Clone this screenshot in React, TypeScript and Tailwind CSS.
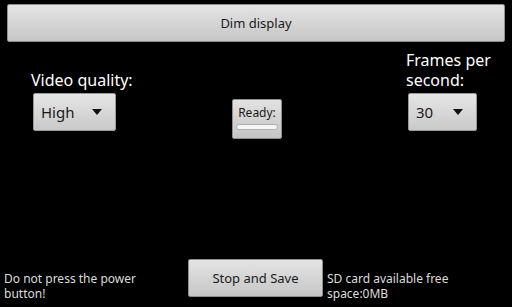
const Spinner = ({ value, width }: { value: string; width: string }) => {
    return (
        <div className={`${width} h-[38px] flex items-center justify-between pl-[7px] pr-[13px] rounded-[2px] bg-gradient-to-b from-[#e6e6e6] to-[#c9c9c9] border border-[#9a9a9a]`}>
            <span className="text-[15px] leading-[18px] text-[#1a1a1a]">{value}</span>
            <svg width="10" height="6" viewBox="0 0 10 6">
                <path d="M0 0 L10 0 L5 6 Z" fill="#111" />
            </svg>
        </div>
    )
}

const App = () => {
    return (
        <div className="w-[512px] h-[307px] bg-black flex flex-col overflow-hidden" style={{ fontFamily: '"Noto Sans", "Open Sans", sans-serif' }}>
            <div className="px-[7px] pt-[4px]">
                <button className="w-full h-[38px] rounded-[2px] bg-gradient-to-b from-[#e4e4e4] to-[#c6c6c6] border border-[#8f8f8f] text-[13px] leading-[16px] text-[#1a1a1a]">
                    Dim display
                </button>
            </div>

            <div className="flex items-start pl-[31px] pr-[18px] pt-[8px]">
                <div className="flex flex-col w-[104px] mt-[20px]">
                    <span className="text-[16px] leading-[21px] text-white whitespace-nowrap">Video quality:</span>
                    <div className="ml-[2px] mt-[2px]">
                        <Spinner value="High" width="w-[83px]" />
                    </div>
                </div>

                <div className="ml-[97px] mt-[49px] w-[50px] h-[40px] flex flex-col items-center pt-[5px] rounded-[2px] bg-gradient-to-b from-[#e2e2e2] to-[#c4c4c4] border border-[#8f8f8f]">
                    <span className="text-[12px] leading-[16px] text-[#1a1a1a]">Ready:</span>
                    <div className="w-[42px] h-[6px] mt-[3px] rounded-full bg-[#f6f6f6] border border-[#b0b0b0]"></div>
                </div>

                <div className="ml-auto flex flex-col w-[88px]">
                    <span className="text-[16px] leading-[20px] text-white">Frames per<br />second:</span>
                    <div className="ml-[2px] mt-[3px]">
                        <Spinner value="30" width="w-[69px]" />
                    </div>
                </div>
            </div>

            <div className="mt-auto flex items-end pb-[6px]">
                <div className="w-[184px] pl-[4px] text-[12px] leading-[15px] text-[#dcdcdc]">
                    Do not press the power<br />button!
                </div>
                <button className="ml-[4px] w-[135px] h-[38px] rounded-[2px] bg-gradient-to-b from-[#e4e4e4] to-[#c6c6c6] border border-[#8f8f8f] text-[13px] leading-[16px] text-[#1a1a1a] mb-[4px]">
                    Stop and Save
                </button>
                <div className="ml-[4px] text-[12px] leading-[15px] text-[#dcdcdc]">
                    SD card available free<br />space:0MB
                </div>
            </div>
        </div>
    )
}

export default App
